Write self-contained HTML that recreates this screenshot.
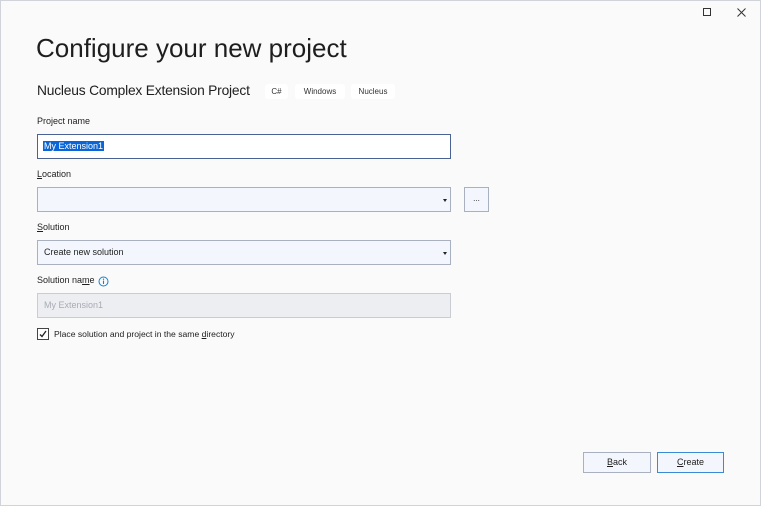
<!DOCTYPE html>
<html><head><style>
*{margin:0;padding:0;box-sizing:border-box}
body{width:761px;height:506px;background:#fafafb;font-family:"Liberation Sans",sans-serif;color:#1e1e1e;position:relative;overflow:hidden}
.frame{position:absolute;left:0;top:0;width:761px;height:506px;border:1px solid #d0d3da}
.a{position:absolute;white-space:nowrap}
.lbl{font-size:9px;color:#1e1e1e}
.box{position:absolute;left:37px;width:414px;height:25px;border:1px solid #a9b0bf;background:#f3f6fd}
.tag{position:absolute;top:84px;height:15px;background:#fff;border-radius:3px;font-size:8px;line-height:15px;text-align:center;color:#333}
.dd{position:absolute;right:3px;top:11px;width:0;height:0;border-left:2.5px solid transparent;border-right:2.5px solid transparent;border-top:3px solid #222}
.btn{position:absolute;top:452px;height:21px;background:#f3f6fd;font-size:9px;line-height:19px;text-align:center}
</style></head><body>
<div class="frame"></div>
<div class="a" style="left:703px;top:8px;width:8px;height:8px;border:1px solid #333"></div>
<svg class="a" style="left:737px;top:8px" width="9" height="9"><path d="M0.5 0.5L8.5 8.5M8.5 0.5L0.5 8.5" stroke="#333" stroke-width="1"/></svg>
<div class="a" style="left:36px;top:33px;font-size:26px;color:#1e1e1e">Configure your new project</div>
<div class="a" style="left:37px;top:83px;font-size:13.8px;letter-spacing:-0.2px">Nucleus Complex Extension Project</div>
<div class="tag" style="left:265px;width:23px">C#</div>
<div class="tag" style="left:295px;width:50px">Windows</div>
<div class="tag" style="left:351px;width:44px">Nucleus</div>
<div class="a lbl" style="left:37px;top:116px">Project name</div>
<div class="box" style="top:134px;background:#fff;border-color:#4a6394"><span class="a" style="left:5px;top:6px;font-size:9px;background:#0a66d8;color:#fff;padding:0 1px">My Extension1</span></div>
<div class="a lbl" style="left:37px;top:169px"><u>L</u>ocation</div>
<div class="box" style="top:187px"><div class="dd"></div></div>
<div class="a" style="left:464px;top:187px;width:25px;height:25px;border:1px solid #a9b0bf;background:#f3f6fd;font-size:8px;text-align:center;line-height:22px">...</div>
<div class="a lbl" style="left:37px;top:222px"><u>S</u>olution</div>
<div class="box" style="top:240px"><span class="a" style="left:6px;top:6px;font-size:9px">Create new solution</span><div class="dd"></div></div>
<div class="a lbl" style="left:37px;top:275px">Solution na<u>m</u>e</div>
<svg class="a" style="left:98px;top:276px" width="11" height="11"><circle cx="5.5" cy="5.5" r="4.5" fill="none" stroke="#1a7fc9" stroke-width="1"/><path d="M5.5 4.6V8" stroke="#1a7fc9" stroke-width="1.1"/><circle cx="5.5" cy="3.2" r="0.65" fill="#1a7fc9"/></svg>
<div class="box" style="top:293px;background:#eceef2;border-color:#c9ccd3"><span class="a" style="left:6px;top:6px;font-size:9px;color:#a8abb2">My Extension1</span></div>
<div class="a" style="left:37px;top:328px;width:12px;height:12px;border:1px solid #444;background:#fff"></div>
<svg class="a" style="left:38px;top:329px" width="10" height="10"><path d="M2 5.5L4 7.5L8 2" stroke="#222" stroke-width="1.3" fill="none"/></svg>
<div class="a lbl" style="left:54px;top:329px;font-size:8.6px">Place solution and project in the same <u>d</u>irectory</div>
<div class="btn" style="left:583px;width:68px;border:1px solid #a9b0bf"><u>B</u>ack</div>
<div class="btn" style="left:657px;width:67px;border:1px solid #3b8ad6"><u>C</u>reate</div>
</body></html>
